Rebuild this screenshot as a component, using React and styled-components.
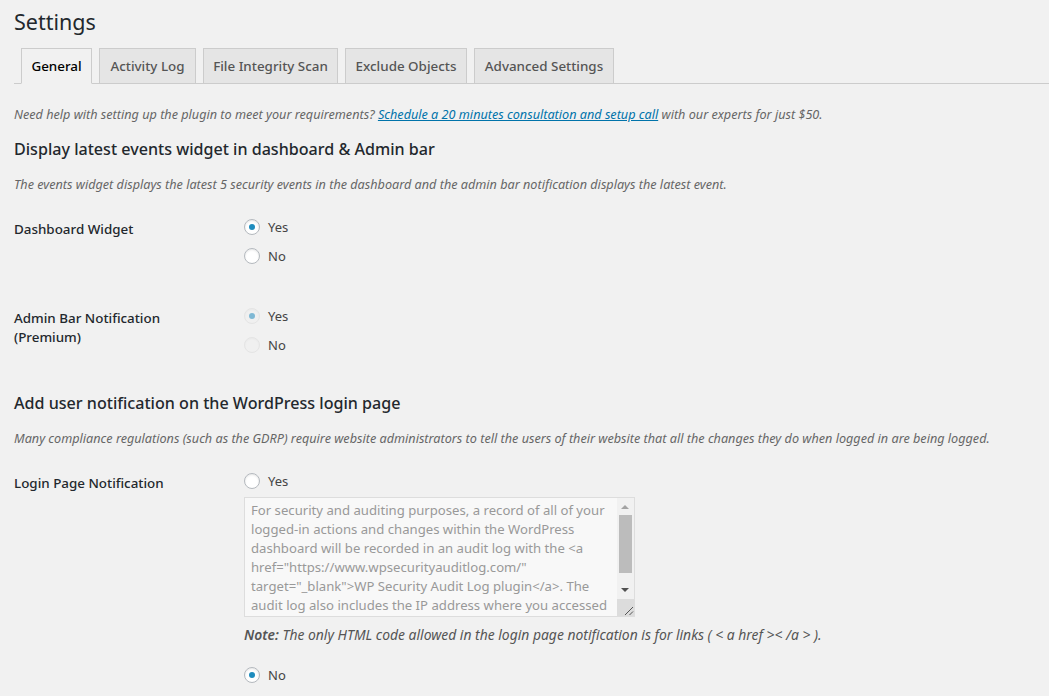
import React from "react";
import styled, { createGlobalStyle } from "styled-components";

const Global = createGlobalStyle`
  html, body { margin: 0; padding: 0; background: #f1f1f1; overflow: hidden; height: 696px; }
  body { font-family: "Noto Sans", "Open Sans", sans-serif; font-size: 13px; color: #444; }
`;
const Page = styled.div`padding: 0 0 0 14px; width: 1035px; height: 696px; overflow: hidden;`;
const Title = styled.h1`margin: 0; padding-top: 7px; height: 48px; box-sizing: border-box; font-size: 21.5px; line-height: 29px; font-weight: 400; color: #23282d;`;
const Tabs = styled.div`display: flex; gap: 7px; height: 36px; box-sizing: border-box; padding-left: 7px; border-bottom: 1px solid #ccc;`;
const Tab = styled.div`
  box-sizing: border-box; height: ${p => (p.$active ? "36px" : "35px")}; width: ${p => p.$w}px;
  display: flex; align-items: center; justify-content: center;
  border: 1px solid #ccc; border-bottom: ${p => (p.$active ? "1px solid #f1f1f1" : "none")};
  background: ${p => (p.$active ? "#f1f1f1" : "#e5e5e5")};
  color: ${p => (p.$active ? "#000" : "#555")};
  font-size: 13.4px; font-weight: 500; white-space: nowrap;
`;
const Help = styled.p`margin: 20px 0 0; font-size: 12.65px; line-height: 20px; height: 20px; font-style: italic; color: #666; white-space: nowrap;`;
const HelpLink = styled.a`color: #0073aa; text-decoration: underline;`;
const Heading = styled.h2`margin: ${p => p.$mt}px 0 0; font-size: 16.1px; line-height: 22px; font-weight: 500; color: #23282d; white-space: nowrap;`;
const Desc = styled.p`margin: 14px 0 0; font-size: 12.65px; line-height: 20px; font-style: italic; color: #666; white-space: nowrap;`;
const Row = styled.div`display: grid; grid-template-columns: 230px 1fr; margin-top: ${p => p.$mt}px;`;
const Label = styled.div`font-size: 13.4px; font-weight: 500; line-height: 19px; color: #23282d; padding-top: ${p => p.$pt || 0}px;`;
const Options = styled.div`display: flex; flex-direction: column;`;
const Option = styled.label`display: flex; align-items: center; gap: 8px; height: 29px; margin-top: ${p => p.$mt || 0}px; font-size: 13px; color: #444;`;
const Radio = styled.span`
  box-sizing: border-box; width: 16px; height: 16px; border-radius: 50%;
  border: 1px solid ${p => (p.$disabled ? "#e4e4e4" : "#b4b9be")};
  background: ${p => (p.$disabled ? "#f0f0f0" : "#fff")};
  box-shadow: inset 0 1px 2px rgba(0,0,0,${p => (p.$disabled ? "0.03" : "0.1")});
  display: flex; align-items: center; justify-content: center;
  &::before {
    content: ""; width: 6px; height: 6px; border-radius: 50%;
    display: ${p => (p.$checked ? "block" : "none")};
    background: ${p => (p.$disabled ? "#7fb8d4" : "#1e8cbe")};
  }
`;
const Area = styled.div`
  position: relative; box-sizing: border-box; width: 391px; height: 120px; margin: 2px 0 0;
  border: 1px solid #ddd; background: #f8f8f8; overflow: hidden;
`;
const AreaText = styled.div`
  box-sizing: border-box; width: 373px; padding: 3px 6px;
  font-size: 13.15px; line-height: 19px; color: #999;
  white-space: pre; height: 118px; overflow: hidden;
`;
const Scrollbar = styled.div`
  position: absolute; top: 0; right: 0; width: 17px; height: 118px; background: #f1f1f1;
  display: flex; flex-direction: column; align-items: center;
`;
const Thumb = styled.div`width: 13px; height: 58px; margin-top: 17px; background: #bcbcbc;`;
const ArrowUp = styled.div`position: absolute; top: 7px; left: 4px; width: 0; height: 0; border: 4px solid transparent; border-top: 0; border-bottom: 4px solid #a3a3a3;`;
const ArrowDown = styled.div`position: absolute; top: 90px; left: 4px; width: 0; height: 0; border: 4px solid transparent; border-bottom: 0; border-top: 4px solid #505050;`;
const Grip = styled.svg`position: absolute; right: 0; bottom: 0; width: 17px; height: 17px; background: #dcdcdc; display: block;`;
const Note = styled.p`margin: 8px 0 0; font-size: 13.9px; line-height: 20px; font-style: italic; color: #555; white-space: nowrap;`;
const NoteLead = styled.b`font-weight: 600;`;

const Opt = ({ checked, disabled, mt, children }) => (
  <Option $mt={mt}>
    <Radio $checked={checked} $disabled={disabled} />
    <span>{children}</span>
  </Option>
);

const text = `For security and auditing purposes, a record of all of your
logged-in actions and changes within the WordPress
dashboard will be recorded in an audit log with the <a
href="https://www.wpsecurityauditlog.com/"
target="_blank">WP Security Audit Log plugin</a>. The
audit log also includes the IP address where you accessed`;

export default function App() {
  return (
    <Page>
      <Global />
      <Title>Settings</Title>
      <Tabs>
        <Tab $active $w={71}>General</Tab>
        <Tab $w={97}>Activity Log</Tab>
        <Tab $w={135}>File Integrity Scan</Tab>
        <Tab $w={122}>Exclude Objects</Tab>
        <Tab $w={140}>Advanced Settings</Tab>
      </Tabs>
      <Help>
        Need help with setting up the plugin to meet your requirements?{" "}
        <HelpLink href="#">Schedule a 20 minutes consultation and setup call</HelpLink> with our experts for just $50.
      </Help>
      <Heading $mt={14}>Display latest events widget in dashboard &amp; Admin bar</Heading>
      <Desc>The events widget displays the latest 5 security events in the dashboard and the admin bar notification displays the latest event.</Desc>
      <Row $mt={18}>
        <Label $pt={8}>Dashboard Widget</Label>
        <Options>
          <Opt checked>Yes</Opt>
          <Opt>No</Opt>
        </Options>
      </Row>
      <Row $mt={31}>
        <Label $pt={8}>Admin Bar Notification<br />(Premium)</Label>
        <Options>
          <Opt checked disabled>Yes</Opt>
          <Opt disabled>No</Opt>
        </Options>
      </Row>
      <Heading $mt={33}>Add user notification on the WordPress login page</Heading>
      <Desc>Many compliance regulations (such as the GDRP) require website administrators to tell the users of their website that all the changes they do when logged in are being logged.</Desc>
      <Row $mt={18}>
        <Label $pt={8}>Login Page Notification</Label>
        <Options>
          <Opt>Yes</Opt>
          <Area>
            <AreaText>{text}</AreaText>
            <Scrollbar>
              <ArrowUp />
              <Thumb />
              <ArrowDown />
            </Scrollbar>
            <Grip viewBox="0 0 17 17">
              <path d="M8 16 L16 8 M12.5 16 L16 12.5" stroke="#555" strokeWidth="1" fill="none" />
            </Grip>
          </Area>
          <Note><NoteLead>Note:</NoteLead> The only HTML code allowed in the login page notification is for links ( &lt; a href &gt;&lt; /a &gt; ).</Note>
          <Opt checked mt={15}>No</Opt>
        </Options>
      </Row>
    </Page>
  );
}
